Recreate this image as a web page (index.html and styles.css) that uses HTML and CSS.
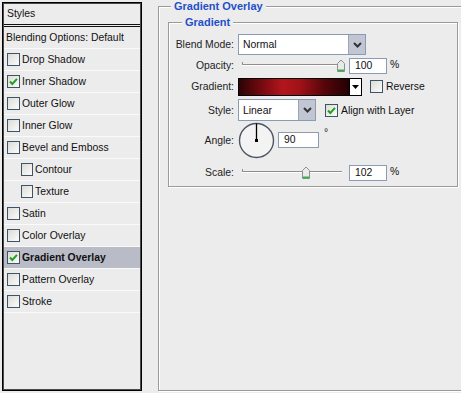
FILE: index.html
```html
<!DOCTYPE html>
<html lang="en">
<head>
    <meta charset="UTF-8">
    <meta name="viewport" content="width=device-width, initial-scale=1.0">
    <title>Layer Style</title>
    <link rel="stylesheet" href="styles.css">
</head>
<body>
<div class="window">

    <div class="styles-list">
        <div class="list-head">Styles</div>
        <div class="list-item plain">Blending Options: Default</div>
        <div class="list-item"><span class="cb"></span>Drop Shadow</div>
        <div class="list-item"><span class="cb"><svg width="11" height="11" viewBox="0 0 11 11"><path d="M2 5.5l2.3 2.5L9 2.8" fill="none" stroke="#21a121" stroke-width="2"/></svg></span>Inner Shadow</div>
        <div class="list-item"><span class="cb"></span>Outer Glow</div>
        <div class="list-item"><span class="cb"></span>Inner Glow</div>
        <div class="list-item"><span class="cb"></span>Bevel and Emboss</div>
        <div class="list-item sub"><span class="cb"></span>Contour</div>
        <div class="list-item sub"><span class="cb"></span>Texture</div>
        <div class="list-item"><span class="cb"></span>Satin</div>
        <div class="list-item"><span class="cb"></span>Color Overlay</div>
        <div class="list-item selected"><span class="cb"><svg width="11" height="11" viewBox="0 0 11 11"><path d="M2 5.5l2.3 2.5L9 2.8" fill="none" stroke="#21a121" stroke-width="2"/></svg></span>Gradient Overlay</div>
        <div class="list-item"><span class="cb"></span>Pattern Overlay</div>
        <div class="list-item"><span class="cb"></span>Stroke</div>
    </div><!-- // styles-list -->

    <fieldset class="group outer">
        <legend>Gradient Overlay</legend>

        <fieldset class="group inner">
            <legend>Gradient</legend>

            <div class="row r-blend">
                <label class="lbl">Blend Mode:</label>
                <div class="select w-blend">
                    <span class="select-text">Normal</span>
                    <span class="select-btn"><svg width="9" height="6" viewBox="0 0 9 6"><path d="M1 1l3.5 3.5L8 1" fill="none" stroke="#333" stroke-width="2"/></svg></span>
                </div>
            </div>

            <div class="row r-opacity">
                <label class="lbl">Opacity:</label>
                <div class="slider">
                    <span class="thumb" style="left: 94px"><svg width="10" height="13" viewBox="0 0 10 13"><path d="M1.5 12.5V4.5L5 1l3.5 3.5v8z" fill="#e9ebe9" stroke="#8a9096"/><path d="M2 11.5h6" stroke="#3cb043" stroke-width="2"/></svg></span>
                </div>
                <span class="num">100</span>
                <span class="unit">%</span>
            </div>

            <div class="row r-gradient">
                <label class="lbl">Gradient:</label>
                <div class="swatch">
                    <span class="swatch-fill"></span>
                    <span class="swatch-btn"><svg width="7" height="4" viewBox="0 0 7 4"><path d="M0 0h7L3.5 4z" fill="#000"/></svg></span>
                </div>
                <span class="cb"></span>
                <span class="cb-text">Reverse</span>
            </div>

            <div class="row r-style">
                <label class="lbl">Style:</label>
                <div class="select w-style">
                    <span class="select-text">Linear</span>
                    <span class="select-btn"><svg width="9" height="6" viewBox="0 0 9 6"><path d="M1 1l3.5 3.5L8 1" fill="none" stroke="#333" stroke-width="2"/></svg></span>
                </div>
                <span class="cb align-cb"><svg width="11" height="11" viewBox="0 0 11 11"><path d="M2 5.5l2.3 2.5L9 2.8" fill="none" stroke="#21a121" stroke-width="2"/></svg></span>
                <span class="cb-text">Align with Layer</span>
            </div>

            <div class="row r-angle">
                <label class="lbl">Angle:</label>
                <svg class="dial" width="37" height="37" viewBox="0 0 37 37">
                    <circle cx="18.5" cy="18.5" r="17" fill="#f3f3f3" stroke="#4d5563" stroke-width="1.4"/>
                    <path d="M18.5 18.5V1.5" stroke="#000" stroke-width="1.3"/>
                    <rect x="17" y="17" width="3" height="3" fill="#000"/>
                </svg>
                <span class="num angle-num">90</span>
                <span class="deg">°</span>
            </div>

            <div class="row r-scale">
                <label class="lbl">Scale:</label>
                <div class="slider">
                    <span class="thumb" style="left: 59px"><svg width="10" height="13" viewBox="0 0 10 13"><path d="M1.5 12.5V4.5L5 1l3.5 3.5v8z" fill="#e9ebe9" stroke="#8a9096"/><path d="M2 11.5h6" stroke="#3cb043" stroke-width="2"/></svg></span>
                </div>
                <span class="num">102</span>
                <span class="unit">%</span>
            </div>
        </fieldset>
    </fieldset>

</div>
</body>
</html>
```

FILE: styles.css
```css
body {
	margin: 0;
	background-color: #ececec;
	font: 10.4px "Liberation Sans", Arial, sans-serif;
	color: #111;
	overflow: hidden;
}

.window {
	display: flex;
	align-items: flex-start;
	padding: 2px 0 0 2px;
	height: 393px;
	box-sizing: border-box;
}

/* left list */
.styles-list {
	flex: none;
	width: 140px;
	height: 389px;
	box-sizing: border-box;
	border: 1px solid #000;
	box-shadow: inset 0 0 0 1px #4a4a4a;
	padding: 1px;
}

.list-head {
	height: 20px;
	line-height: 20px;
	padding-left: 3px;
	border-bottom: 3px double #111;
}

.list-item {
	display: flex;
	align-items: center;
	gap: 2px;
	height: 21px;
	padding-left: 3px;
	border-bottom: 1px solid #fafafa;
}

.list-item.plain {
	padding-left: 2px;
}

.list-item.sub {
	padding-left: 17px;
}

.list-item.selected {
	background-color: #b9bbc7;
	font-weight: bold;
}

.cb {
	flex: none;
	display: flex;
	align-items: center;
	justify-content: center;
	width: 13px;
	height: 13px;
	box-sizing: border-box;
	border: 1px solid #3d5468;
	background: linear-gradient(135deg, #dcdcd6, #fbfbfb);
}

.sub .cb {
	width: 12px;
}

/* group boxes */
.group {
	margin: 0;
	box-sizing: border-box;
	border: 1px solid #9a9a9a;
	box-shadow: 1px 1px 0 #fff, inset 1px 1px 0 #fff;
	min-width: 0;
}

.group legend {
	padding: 0 3px;
	line-height: 13px;
	font-size: 11px;
	font-weight: bold;
	color: #1f50c8;
	background-color: #ececec;
}

.outer {
	flex: none;
	margin: -2px 0 0 16px;
	width: 303px;
	height: 391px;
	padding: 3px 0 0 9px;
	border-right: 0;
}

.outer > legend {
	margin-left: 3px;
}

.inner {
	width: 290px;
	padding: 5px 0 4px 0;
}

.inner > legend {
	margin-left: 13px;
}

/* rows */
.row {
	display: flex;
	align-items: center;
}

.r-blend { height: 21px; }
.r-opacity { height: 17px; margin-top: 2px; }
.r-gradient { height: 19px; margin-top: 3px; }
.r-style { height: 22px; margin-top: 3px; }
.r-angle { height: 38px; }
.r-scale { height: 19px; margin-top: 4px; }

.lbl {
	flex: none;
	width: 69px;
	padding-right: 4px;
	box-sizing: border-box;
	text-align: right;
	color: #222;
}

.select {
	display: flex;
	height: 100%;
	box-sizing: border-box;
	border: 1px solid #8a9cb4;
	background-color: #fff;
}

.w-blend { width: 128px; }
.w-style { width: 78px; }

.select-text {
	flex: 1;
	padding-left: 4px;
	align-self: center;
}

.select-btn {
	display: flex;
	align-items: center;
	justify-content: center;
	width: 16px;
	background-color: #c2c6d3;
	border: 1px solid #9aa3b8;
	border-width: 0 0 0 1px;
}

.slider {
	position: relative;
	flex: none;
	width: 100px;
	height: 13px;
	margin-left: 4px;
}

.slider::before {
	content: "";
	position: absolute;
	left: 0;
	right: 0;
	top: 5px;
	height: 1px;
	background-color: #8e8e8e;
	border-bottom: 1px solid #fff;
}

.slider::after {
	content: "";
	position: absolute;
	left: 0;
	top: 3px;
	width: 1px;
	height: 3px;
	background-color: #8e8e8e;
}

.thumb {
	position: absolute;
	top: 0;
	display: flex;
}

.num {
	flex: none;
	width: 38px;
	height: 16px;
	line-height: 14px;
	box-sizing: border-box;
	padding-left: 5px;
	margin-left: 7px;
	border: 1px solid #8a9cb4;
	background-color: #fff;
}

.unit {
	margin-left: 3px;
	margin-bottom: 3px;
}

.swatch {
	display: flex;
	width: 124px;
	height: 18px;
	box-sizing: border-box;
	border: 1px solid #000;
}

.swatch-fill {
	flex: 1;
	background: linear-gradient(90deg, #2a0306 0%, #7a0b10 22%, #b3161c 40%, #a11218 55%, #55060a 78%, #220003 100%);
}

.swatch-btn {
	display: flex;
	align-items: center;
	justify-content: center;
	width: 11px;
	background-color: #fff;
	border-left: 1px solid #000;
}

.r-gradient .cb {
	margin-left: 8px;
}

.cb-text {
	margin-left: 3px;
}

.align-cb {
	margin-left: 9px;
}

.dial {
	flex: none;
}

.angle-num {
	width: 41px;
	margin-left: 3px;
}

.deg {
	align-self: flex-start;
	margin: 6px 0 0 5px;
}
```
